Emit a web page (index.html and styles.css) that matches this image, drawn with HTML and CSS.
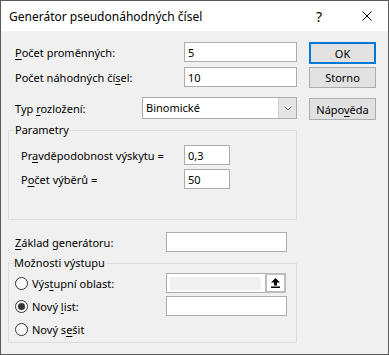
FILE: index.html
```html
<!DOCTYPE html>
<html lang="cs">
<head>
  <meta charset="UTF-8" />
  <title>Generátor pseudonáhodných čísel</title>
  <link rel="stylesheet" href="styles.css">
</head>
<body>
  <div class="dialog">
    <div class="titlebar">
      <div class="title">Generátor pseudonáhodných čísel</div>
      <div class="help">?</div>
      <div class="close">
        <svg width="10" height="10" viewBox="0 0 10 10"><path d="M0.5 0.5 L9.5 9.5 M9.5 0.5 L0.5 9.5" stroke="#000" stroke-width="1" fill="none"/></svg>
      </div>
    </div>

    <div class="body">
      <div class="form">
        <div class="row">
          <label class="lbl"><u>P</u>očet proměnných:</label>
          <input class="field wide" type="text" value="5">
        </div>
        <div class="row gap5">
          <label class="lbl">Počet náhodných čí<u>s</u>el:</label>
          <input class="field wide" type="text" value="10">
        </div>
        <div class="row gap10">
          <label class="lbl short">Typ <u>r</u>ozložení:</label>
          <div class="combo">
            <div class="combo-text">Binomické</div>
            <div class="combo-btn">
              <svg width="8" height="5" viewBox="0 0 8 5"><path d="M0.5 0.5 L4 4 L7.5 0.5" stroke="#6d6d6d" stroke-width="1" fill="none"/></svg>
            </div>
          </div>
        </div>

        <fieldset class="group">
          <legend>Parametry</legend>
          <div class="prow first">
            <label class="plbl">Pr<u>a</u>vděpodobnost výskytu =</label>
            <input class="field small" type="text" value="0,3">
          </div>
          <div class="prow">
            <label class="plbl">P<u>o</u>čet výběrů =</label>
            <input class="field small" type="text" value="50">
          </div>
        </fieldset>

        <div class="row seed">
          <label class="lbl seedlbl"><u>Z</u>áklad generátoru:</label>
          <input class="field mid" type="text" value="">
        </div>

        <fieldset class="group output">
          <legend>Možnosti výstupu</legend>
          <div class="orow first">
            <label class="opt"><span class="radio"></span><span>Výs<u>t</u>upní oblast:</span></label>
            <div class="refedit">
              <div class="ref-area"></div>
              <div class="ref-btn">
                <svg width="9" height="10" viewBox="0 0 9 10"><polygon points="4.5,0 9,4.5 6,4.5 6,7.5 3,7.5 3,4.5 0,4.5" fill="#000"/><rect x="0" y="8.5" width="9" height="1.5" fill="#000"/></svg>
              </div>
            </div>
          </div>
          <div class="orow">
            <label class="opt"><span class="radio checked"></span><span>Nový <u>l</u>ist:</span></label>
            <input class="field mid" type="text" value="">
          </div>
          <div class="orow">
            <label class="opt"><span class="radio"></span><span>Nový s<u>e</u>šit</span></label>
          </div>
        </fieldset>
      </div>

      <div class="buttons">
        <button class="btn default">OK</button>
        <button class="btn storno">Storno</button>
        <button class="btn napoveda">Nápo<u>v</u>ěda</button>
      </div>
    </div>
  </div>
</body>
</html>
```

FILE: styles.css
```css
body { margin: 0; font-family: "Noto Sans", sans-serif; font-size: 11px; color: #000; background: #fff; }
u { text-underline-offset: 2px; }

.dialog {
  width: 389px; height: 355px; box-sizing: border-box;
  border: 1px solid #5a5a5a; background: #f0f0f0;
}
.titlebar {
  height: 30px; background: #fff;
  display: flex; align-items: center; font-size: 12px;
}
.title { flex: 1; padding-left: 8px; }
.help { width: 16px; text-align: center; font-size: 14px; margin-right: 19px; }
.close { width: 42px; display: flex; justify-content: center; }

.body { display: flex; padding-top: 11px; }
.form { width: 296px; }
.buttons { margin-left: 12px; display: flex; flex-direction: column; }

.row { display: flex; align-items: center; height: 20px; padding-left: 14px; }
.gap5 { margin-top: 5px; }
.gap10 { margin-top: 10px; height: 22px; }
.lbl { width: 169px; }
.lbl.short { width: 127px; }
.seed { margin-top: 12px; }
.lbl.seedlbl { width: 151px; }

.field {
  box-sizing: border-box; height: 20px; margin: 0;
  border: 1px solid #adadad; background: #fff;
  font: inherit; color: #000; padding: 0 3px; outline: none;
}
.field.wide { width: 113px; }
.field.small { width: 46px; }
.field.mid { width: 121px; }

.combo {
  box-sizing: border-box; width: 155px; height: 22px;
  border: 1px solid #adadad; background: #fff; display: flex;
}
.combo-text { flex: 1; padding-left: 3px; line-height: 20px; }
.combo-btn {
  width: 17px; background: #e5e5e5; border-left: 1px solid #cfcfcf;
  display: flex; align-items: center; justify-content: center;
}

.group {
  box-sizing: border-box; width: 289px; margin: 3px 0 0 7px;
  padding: 0 0 30px 0; border: 1px solid #dcdcdc; min-width: 0;
}
.group legend { margin-left: 5px; padding: 0 1px; line-height: 16px; }
.prow { display: flex; align-items: center; height: 20px; padding-left: 12px; margin-top: 4px; }
.prow.first { margin-top: 7px; }
.plbl { width: 163px; }

.group.output { padding-bottom: 3px; }
.group.output legend { margin-left: 4px; }
.orow { display: flex; align-items: center; height: 20px; padding-left: 6px; margin-top: 3px; }
.orow.first { margin-top: 2px; }
.opt { width: 151px; display: flex; align-items: center; }
.radio {
  box-sizing: border-box; width: 13px; height: 13px; border-radius: 50%;
  border: 1px solid #333; background: #fff; margin-right: 4px;
  display: flex; align-items: center; justify-content: center;
}
.radio.checked::after {
  content: ""; width: 7px; height: 7px; border-radius: 50%; background: #333;
}

.refedit {
  box-sizing: border-box; width: 120px; height: 20px;
  border: 1px solid #adadad; background: #fff; display: flex;
}
.ref-area { flex: 1; margin: 3px 4px 2px 3px; background: #f0f0f0; }
.ref-btn {
  box-sizing: border-box; width: 21px; margin: -1px -1px -1px 0;
  border: 2px solid #bdbdbd; background: #fff;
  display: flex; align-items: center; justify-content: center;
}

.btn {
  box-sizing: border-box; width: 67px; height: 22px; margin: 0;
  background: #e1e1e1; border: 1px solid #adadad;
  font: inherit; color: #000; padding: 0;
}
.btn.default { border: 2px solid #0078d7; }
.btn.storno { margin-top: 3px; height: 21px; }
.btn.napoveda { margin-top: 10px; }
```
